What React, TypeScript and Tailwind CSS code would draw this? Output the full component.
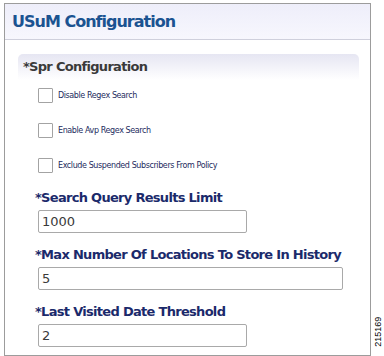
import React from "react";

const font = { fontFamily: '"DejaVu Sans", Verdana, sans-serif' };

const checks = [
  "Disable Regex Search",
  "Enable Avp Regex Search",
  "Exclude Suspended Subscribers From Policy",
];

interface FieldProps {
  label: string;
  value: string;
  wide?: boolean;
}

const Field: React.FC<FieldProps> = ({ label, value, wide }) => {
  return (
    <div className="flex flex-col">
      <div className="pt-[3px] h-[17px] text-[13px] font-bold leading-[14px] text-[#1b2a6b] tracking-[-0.7px] whitespace-nowrap">{label}</div>
      <div
        className={`mt-[5px] ml-[3px] h-[23px] border border-[#a9a9a9] rounded-[2px] flex items-center px-[3px] text-[13px] text-[#3a3a3a] ${
          wide ? "w-[305px]" : "w-[209px]"
        }`}
      >
        {value}
      </div>
    </div>
  );
};

export default function App() {
  return (
    <div className="relative w-[384px] h-[356px] bg-white overflow-hidden" style={font}>
      <div className="ml-[4px] mt-[3px] w-[367px] h-[353px] border border-[#9c9c9c] flex flex-col">
        <div className="h-[36px] shrink-0 border-b border-[#cfd0dc] bg-gradient-to-b from-[#eeeefa] to-[#f7f7fd] flex items-center px-[7px]">
          <span className="text-[16px] font-bold text-[#1b5391] tracking-[-1px]">USuM Configuration</span>
        </div>
        <div className="pl-[13px] pr-[11px] pt-[14px]">
          <div className="h-[26px] rounded-t-[5px] bg-gradient-to-b from-[#e6e6f2] to-white flex items-center px-[5px]">
            <span className="text-[13px] font-bold text-[#3a3a3a] tracking-[-0.7px]">*Spr Configuration</span>
          </div>
          <div className="pl-[20px] pt-[8px] flex flex-col gap-[20px]">
            {checks.map((c) => (
              <div key={c} className="flex items-center h-[15px]">
                <div className="w-[15px] h-[15px] border border-[#a3a3a3] rounded-[1px] bg-white" />
                <span className="ml-[5px] text-[8px] text-[#1d2b5e] tracking-[-0.4px]">{c}</span>
              </div>
            ))}
          </div>
          <div className="pl-[17px] mt-[15px] flex flex-col gap-[12px]">
            <Field label="*Search Query Results Limit" value="1000" />
            <Field label="*Max Number Of Locations To Store In History" value="5" wide />
            <Field label="*Last Visited Date Threshold" value="2" />
          </div>
        </div>
      </div>
      <div className="absolute left-[374px] bottom-[2px] w-[10px] h-[44px] flex items-center justify-center">
        <span className="-rotate-90 text-[9px] text-black whitespace-nowrap" style={{ fontFamily: '"Liberation Sans", Arial, sans-serif' }}>
          215169
        </span>
      </div>
    </div>
  );
}
